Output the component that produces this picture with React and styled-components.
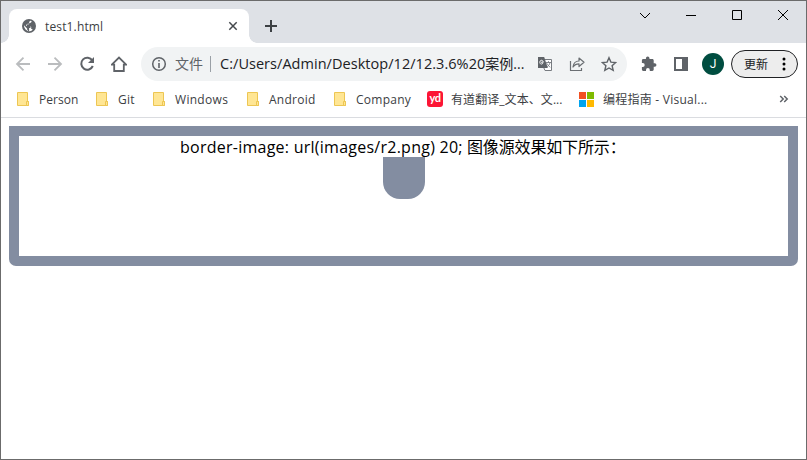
import React from "react";
import styled, { createGlobalStyle } from "styled-components";

const Global = createGlobalStyle`
  * { box-sizing: border-box; }
  body { margin: 0; background: #fff; font-family: "Open Sans", "Noto Sans CJK SC", sans-serif; }
`;
const Window = styled.div`
  width: 807px; height: 460px; border: 1px solid #6b6b6b; background: #fff;
  display: flex; flex-direction: column; overflow: hidden;
`;
const TabStrip = styled.div`
  height: 42px; flex: none; background: #dee1e6; display: flex; padding-left: 8px;
`;
const Tab = styled.div`
  position: relative; width: 240px; height: 34px; margin-top: 8px; padding: 0 11px 0 13px;
  display: flex; align-items: center; background: #fff; border-radius: 8px 8px 0 0;
  &::before, &::after { content: ""; position: absolute; bottom: 0; width: 8px; height: 8px; }
  &::before { left: -8px; background: radial-gradient(circle at 0 0, transparent 7.5px, #fff 8px); }
  &::after { right: -8px; background: radial-gradient(circle at 100% 0, transparent 7.5px, #fff 8px); }
`;
const Label = styled.span`
  font-size: ${(p) => p.$size || 12}px; letter-spacing: ${(p) => p.$track || 0}px;
  color: ${(p) => p.$color || "#3c4043"}; white-space: nowrap; line-height: 20px;
`;
const TabTitle = styled(Label)`flex: 1; margin-left: 9px; padding-top: 2px;`;
const Icon = styled.svg`display: block; flex: none;`;
const NewTab = styled.div`padding: 18px 0 0 15px;`;
const Controls = styled.div`margin-left: auto; display: flex; padding: 8px 17px 0 0; gap: 34px; align-items: flex-start;`;
const Toolbar = styled.div`height: 42px; flex: none; display: flex; align-items: center; padding: 0 8px 0 14px;`;
const Nav = styled.div`width: 126px; display: flex; gap: 16px;`;
const Omnibox = styled.div`
  width: 486px; height: 34px; border-radius: 17px; background: #f1f3f4;
  display: flex; align-items: center; padding: 0 10px; flex: none;
`;
const Scheme = styled(Label)`margin-left: 8px; width: 35px;`;
const Divider = styled.i`width: 1px; height: 16px; background: #9aa0a6; margin-right: 9px;`;
const Url = styled.div`width: 317px; display: flex; align-items: baseline;`;
const OmniIcons = styled.div`display: flex; gap: 16px;`;
const Actions = styled.div`display: flex; align-items: center; margin-left: 14px; gap: 16px;`;
const Avatar = styled.div`
  width: 22px; height: 22px; border-radius: 50%; background: #004d40; color: #fff; margin-left: -3px;
  font: 12px/22px Roboto, sans-serif; text-align: center;
`;
const Update = styled.div`
  width: 67px; height: 28px; border: 1px solid #202124; border-radius: 14px; background: #ededed;
  margin-left: -9px; padding: 0 11px 0 12px; display: flex; align-items: center; justify-content: space-between;
`;
const UpdateLabel = styled(Label)`padding-top: 1px;`;
const Bookmarks = styled.div`
  height: 33px; flex: none; border-bottom: 1px solid #dadce0; display: flex; align-items: center; padding: 0 16px 4px;
`;
const Bookmark = styled.div`width: ${(p) => p.$width}px; flex: none; display: flex; align-items: center;`;
const BookmarkIcon = styled.div`width: ${(p) => p.$width}px; flex: none; display: flex;`;
const BookmarkLabel = styled(Label)`padding-top: 2px;`;
const Youdao = styled.div`
  width: 16px; height: 16px; border-radius: 3px; background: #fc1535; color: #fff;
  font: bold 11px/13px Lato, sans-serif; text-align: center; letter-spacing: -0.4px;
`;
const Tiles = styled.div`
  display: grid; grid-template-columns: 7px 7px; grid-auto-rows: 7px; gap: 1px;
`;
const Tile = styled.i`background: ${(p) => p.$color};`;
const Overflow = styled.div`margin-left: auto; padding-right: 1px;`;
const Page = styled.main`padding: 8px;`;
const Frame = styled.section`
  height: 140px; padding: 10px; border-radius: 0 0 7px 7px; background: #838da1;
`;
const FrameBody = styled.div`
  height: 120px; background: #fff; padding-left: 161px;
`;
const Caption = styled.div`height: 21px; display: flex; align-items: baseline; padding-top: 1px;`;
const CaptionPart = styled(Label)`flex: none; width: ${(p) => p.$width}px;`;
const Shape = styled.div`width: 42px; height: 42px; margin-left: 203px; background: #838da1; border-radius: 0 0 17px 17px;`;

const stroke = { fill: "none", stroke: "currentColor" };
const Folder = () => (
  <Icon width="12" height="14" viewBox="0 0 12 14">
    <path d="M.5.5h10v9h1v4h-11z" fill="#ffe694" stroke="#edc653" />
    <path d="M9.5 13.5v-4h2v4z" fill="#ffe694" stroke="#edc653" />
  </Icon>
);
const links = [
  { name: "Person", width: 79, track: 0.05 },
  { name: "Git", width: 57, track: 0.2 },
  { name: "Windows", width: 94, track: 0.3 },
  { name: "Android", width: 87, track: 0.25 },
  { name: "Company", width: 93, track: 0.25 },
];

export default function App() {
  return (
    <>
      <Global />
      <Window>
        <TabStrip>
          <Tab>
            <Icon width="14" height="14" viewBox="0 0 14 14">
              <circle cx="7" cy="7" r="7" fill="#5f6368" />
              <path d="M8.4 1.7 7.2 2.8v1.4H5.8v1.4H4.3V7h4.2v2.1H7.1v2.8A5.1 5.1 0 0 1 2 6.3l3.1 3.1v1.2l1.3 1.3v.3A5.2 5.2 0 0 0 10.7 10.7L10 10H9.2V8L8.5 7H5V5.8h1.4V4.3h1.5L9.5 3V2a5.3 5.3 0 0 0-1.1-.3z" fill="#fff" />
            </Icon>
            <TabTitle $track={0.15}>test1.html</TabTitle>
            <Icon width="10" height="10" viewBox="0 0 10 10" color="#45494d"><path d="m1.3 1.3 7.4 7.4m0-7.4L1.3 8.7" {...stroke} strokeWidth="1.5" /></Icon>
          </Tab>
          <NewTab><Icon width="14" height="14" viewBox="0 0 14 14" color="#3c4043"><path d="M7 1v12M1 7h12" {...stroke} strokeWidth="2" /></Icon></NewTab>
          <Controls>
            <Icon width="12" height="12" viewBox="0 0 12 12"><path d="m1 4 5 5 5-5" {...stroke} /></Icon>
            <Icon width="12" height="12" viewBox="0 0 12 12"><path d="M1 6.5h10" {...stroke} /></Icon>
            <Icon width="12" height="12" viewBox="0 0 12 12"><path d="M1.5 1.5h9v9h-9z" {...stroke} /></Icon>
            <Icon width="12" height="12" viewBox="0 0 12 12"><path d="m1 1 10 10M11 1 1 11" {...stroke} /></Icon>
          </Controls>
        </TabStrip>
        <Toolbar>
          <Nav>
            <Icon width="16" height="16" viewBox="0 0 16 16" color="#babcbe"><path d="M15 8H2m6.5-6.3L2 8l6.5 6.3" {...stroke} strokeWidth="1.8" /></Icon>
            <Icon width="16" height="16" viewBox="0 0 16 16" color="#babcbe"><path d="M1 8h13M7.5 1.7 14 8l-6.5 6.3" {...stroke} strokeWidth="1.8" /></Icon>
            <Icon width="16" height="16" viewBox="0 0 16 16" color="#5f6368"><path d="M13.3 4.4A6 6 0 1 0 13.8 10" {...stroke} strokeWidth="2" /><path d="M15 1v6H9z" fill="currentColor" /></Icon>
            <Icon width="16" height="16" viewBox="0 0 16 16" color="#5f6368"><path d="M.8 8.7 8 1.5l7.2 7.2h-2.4V15H3.2V8.7z" {...stroke} strokeWidth="1.8" /></Icon>
          </Nav>
          <Omnibox>
            <Icon width="16" height="16" viewBox="0 0 16 16" color="#5f6368"><circle cx="8" cy="8" r="6.3" {...stroke} strokeWidth="1.5" /><path d="M7.2 7h1.6v5H7.2zM7.2 4h1.6v1.6H7.2z" fill="currentColor" /></Icon>
            <Scheme $size={14} $color="#5f6368">文件</Scheme><Divider />
            <Url>
              <Label $size={14.5} $track={0.04} $color="#202124">C:/Users/Admin/Desktop/12/12.3.6%20</Label>
              <Label $size={14} $color="#202124">案例...</Label>
            </Url>
            <OmniIcons>
              <Icon width="16" height="16" viewBox="0 0 16 16">
                <path d="M6 3.5h8.5v11H8L6 10z" fill="#fff" stroke="#777b80" />
                <path d="M1 1h6.2l3.6 11H1z" fill="#5f6368" />
                <path d="M7 5.9H4.8v1h1c-.2 1.8-3 1.6-3-.6s2-2.6 3-1.5" fill="none" stroke="#fff" strokeWidth=".9" />
                <path d="M9 6.5h5M11.5 5.2v1.3m1.5 0c-.4 2.2-1.5 3.2-2.9 4.2m-.4-3.5c.7 1.6 2 2.9 3.6 4" fill="none" stroke="#777b80" strokeWidth=".9" />
              </Icon>
              <Icon width="16" height="16" viewBox="0 0 16 16" color="#6b6f73"><path d="M1.5 5v9.5h11V12M4 11c.5-4 2.7-6 6-6V2l5 4.3-5 4.2V7.8C7.3 7.8 5.4 8.8 4 11z" {...stroke} strokeWidth="1.2" strokeLinejoin="round" /></Icon>
              <Icon width="16" height="16" viewBox="0 0 16 16" color="#5f6368"><path d="m8 1.7 1.9 4.4 4.8.4-3.6 3.2 1.1 4.7L8 12l-4.2 2.4 1.1-4.7-3.6-3.2 4.8-.4z" {...stroke} strokeWidth="1.4" /></Icon>
            </OmniIcons>
          </Omnibox>
          <Actions>
            <Icon width="16" height="16" viewBox="0 0 16 16"><path fill="#5f6368" d="M13.7 7.3h-1V4.5c0-.8-.6-1.4-1.4-1.4H8.5V2.4a1.8 1.8 0 0 0-3.6 0v.7H2.3C1.5 3.1.9 3.7.9 4.5v2.6h.9a1.9 1.9 0 0 1 0 3.8H.9v2.7c0 .8.6 1.4 1.4 1.4H5v-1a1.9 1.9 0 0 1 3.8 0v1h2.5c.8 0 1.4-.6 1.4-1.4v-2.8h1a1.75 1.75 0 0 0 0-3.5z" /></Icon>
            <Icon width="16" height="16" viewBox="0 0 16 16"><path fill="#5f6368" fillRule="evenodd" d="M1 1h14v14H1zm2 2v10h6V3z" /></Icon>
            <Avatar>J</Avatar>
            <Update>
              <UpdateLabel $color="#202124">更新</UpdateLabel>
              <Icon width="4" height="14" viewBox="0 0 4 14"><circle cx="2" cy="2" r="1.5" /><circle cx="2" cy="7" r="1.5" /><circle cx="2" cy="12" r="1.5" /></Icon>
            </Update>
          </Actions>
        </Toolbar>
        <Bookmarks>
          {links.map(({ name, width, track }) => (
            <Bookmark key={name} $width={width}>
              <BookmarkIcon $width={22}><Folder /></BookmarkIcon>
              <BookmarkLabel $track={track}>{name}</BookmarkLabel>
            </Bookmark>
          ))}
          <Bookmark $width={152}>
            <BookmarkIcon $width={24}><Youdao>yd</Youdao></BookmarkIcon>
            <BookmarkLabel $track={0.07}>有道翻译_文本、文...</BookmarkLabel>
          </Bookmark>
          <Bookmark $width={140}>
            <BookmarkIcon $width={24}><Tiles><Tile $color="#f25022" /><Tile $color="#7fba00" /><Tile $color="#00a4ef" /><Tile $color="#ffb900" /></Tiles></BookmarkIcon>
            <BookmarkLabel $track={0.25}>编程指南 - Visual...</BookmarkLabel>
          </Bookmark>
          <Overflow><Icon width="10" height="8" viewBox="0 0 10 8" color="#5f6368"><path d="m1.2 1 3 3-3 3m4-6 3 3-3 3" {...stroke} strokeWidth="1.5" /></Icon></Overflow>
        </Bookmarks>
        <Page>
          <Frame>
            <FrameBody>
              <Caption>
                <CaptionPart $size={16} $track={0.25} $width={287} $color="#000">border-image: url(images/r2.png) 20;</CaptionPart>
                <CaptionPart $size={16} $track={-0.15} $width={160} $color="#000">图像源效果如下所示：</CaptionPart>
              </Caption>
              <Shape />
            </FrameBody>
          </Frame>
        </Page>
      </Window>
    </>
  );
}
